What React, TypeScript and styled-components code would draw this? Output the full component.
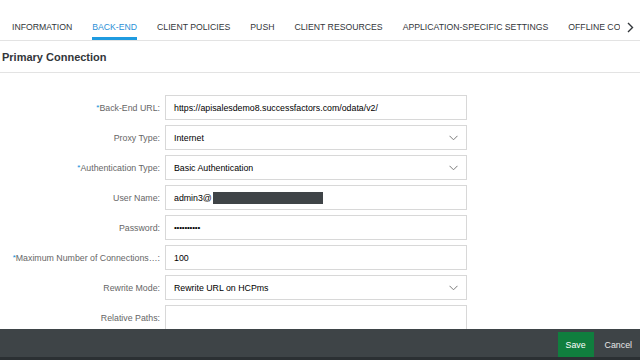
import styled, {createGlobalStyle, css} from "styled-components";

const GlobalStyle = createGlobalStyle`
  html, body {
    margin: 0;
    padding: 0;
    background: #ffffff;
    font-family: "Liberation Sans", Arial, sans-serif;
  }
`

const Page = styled.div`
  width: 640px;
  height: 360px;
  display: flex;
  flex-direction: column;
  overflow: hidden;
  background: #ffffff;
`

const Content = styled.div`
  flex: 1;
  overflow: hidden;
`

const TabBar = styled.div`
  display: flex;
  align-items: flex-end;
  height: 40px;
  border-bottom: 1px solid #e3e3e3;
`

const TabScroller = styled.div`
  flex: 1;
  display: flex;
  align-items: flex-end;
  gap: 20px;
  padding-left: 12px;
  overflow: hidden;
  white-space: nowrap;
`

const Tab = styled.div<{ selected?: boolean }>`
  font-size: 8.7px;
  line-height: 12px;
  color: #32363a;
  padding-bottom: 4px;
  border-bottom: 3px solid transparent;
  flex-shrink: 0;

  ${({selected}) => selected && css`
    color: #2a8fd6;
    border-bottom-color: #1f9be0;
  `}
`

const ScrollArrow = styled.div`
  width: 20px;
  height: 40px;
  display: flex;
  align-items: center;
  justify-content: center;
  padding-top: 14px;
  box-sizing: border-box;
  background: #ffffff;
`

const SectionTitle = styled.div`
  height: 31px;
  display: flex;
  align-items: center;
  padding-left: 2px;
  font-size: 11px;
  font-weight: bold;
  color: #32363a;
  border-bottom: 1px solid #e3e3e3;
`

const Form = styled.div`
  display: flex;
  flex-direction: column;
  gap: 5px;
  padding-top: 22px;
`

const Row = styled.div`
  display: flex;
  align-items: center;
  height: 25px;
`

const Label = styled.div`
  width: 165px;
  flex-shrink: 0;
  text-align: right;
  padding-right: 5px;
  box-sizing: border-box;
  font-size: 8.8px;
  color: #666666;
  white-space: nowrap;
`

const Required = styled.span`
  color: #0a8ad8;
  font-size: 8px;
  vertical-align: 1px;
`

const Field = styled.div`
  width: 302px;
  height: 25px;
  box-sizing: border-box;
  border: 1px solid #d8d8d8;
  display: flex;
  align-items: center;
  padding: 0 8px;
  font-size: 8.8px;
  color: #000000;
  white-space: nowrap;
`

const FieldValue = styled.span`
  flex: 1;
`

const Masked = styled.span`
  font-size: 8px;
  letter-spacing: -0.2px;
`

const Redacted = styled.span`
  display: inline-block;
  width: 110px;
  height: 12px;
  margin-left: 1px;
  vertical-align: middle;
  background: #3f4447;
`

const Footer = styled.div`
  height: 31px;
  flex-shrink: 0;
  box-sizing: border-box;
  background: #3e4447;
  border-bottom: 3px solid #2b3033;
  display: flex;
  align-items: center;
  justify-content: flex-end;
  gap: 11px;
  padding-right: 8px;
`

const SaveButton = styled.div`
  width: 36px;
  height: 25px;
  background: #107e3e;
  color: #ffffff;
  font-size: 8.8px;
  display: flex;
  align-items: center;
  justify-content: center;
  margin-top: 3px;
`

const CancelButton = styled.div`
  color: #e8e8e8;
  font-size: 8.8px;
  margin-top: 3px;
`

const Chevron = () => (
  <svg width="9" height="6" viewBox="0 0 9 6">
    <path d="M0.5 0.8 L4.5 4.8 L8.5 0.8" fill="none" stroke="#7a7a7a" strokeWidth="1"/>
  </svg>
)

const RightArrow = () => (
  <svg width="7" height="11" viewBox="0 0 7 11">
    <path d="M1 1 L5.5 5.5 L1 10" fill="none" stroke="#32363a" strokeWidth="1.4"/>
  </svg>
)

const tabs = [
  "INFORMATION",
  "BACK-END",
  "CLIENT POLICIES",
  "PUSH",
  "CLIENT RESOURCES",
  "APPLICATION-SPECIFIC SETTINGS",
  "OFFLINE CONFIGURATION",
]

export default function App() {
  return (
    <>
      <GlobalStyle/>
      <Page>
        <Content>
          <TabBar>
            <TabScroller>
              {tabs.map(t => <Tab key={t} selected={t === "BACK-END"}>{t}</Tab>)}
            </TabScroller>
            <ScrollArrow><RightArrow/></ScrollArrow>
          </TabBar>
          <SectionTitle>Primary Connection</SectionTitle>
          <Form>
            <Row>
              <Label><Required>*</Required>Back-End URL:</Label>
              <Field>https://apisalesdemo8.successfactors.com/odata/v2/</Field>
            </Row>
            <Row>
              <Label>Proxy Type:</Label>
              <Field><FieldValue>Internet</FieldValue><Chevron/></Field>
            </Row>
            <Row>
              <Label><Required>*</Required>Authentication Type:</Label>
              <Field><FieldValue>Basic Authentication</FieldValue><Chevron/></Field>
            </Row>
            <Row>
              <Label>User Name:</Label>
              <Field>admin3@<Redacted/></Field>
            </Row>
            <Row>
              <Label>Password:</Label>
              <Field><Masked>••••••••••</Masked></Field>
            </Row>
            <Row>
              <Label><Required>*</Required>Maximum Number of Connections…:</Label>
              <Field>100</Field>
            </Row>
            <Row>
              <Label>Rewrite Mode:</Label>
              <Field><FieldValue>Rewrite URL on HCPms</FieldValue><Chevron/></Field>
            </Row>
            <Row>
              <Label>Relative Paths:</Label>
              <Field/>
            </Row>
          </Form>
        </Content>
        <Footer>
          <SaveButton>Save</SaveButton>
          <CancelButton>Cancel</CancelButton>
        </Footer>
      </Page>
    </>
  )
}
